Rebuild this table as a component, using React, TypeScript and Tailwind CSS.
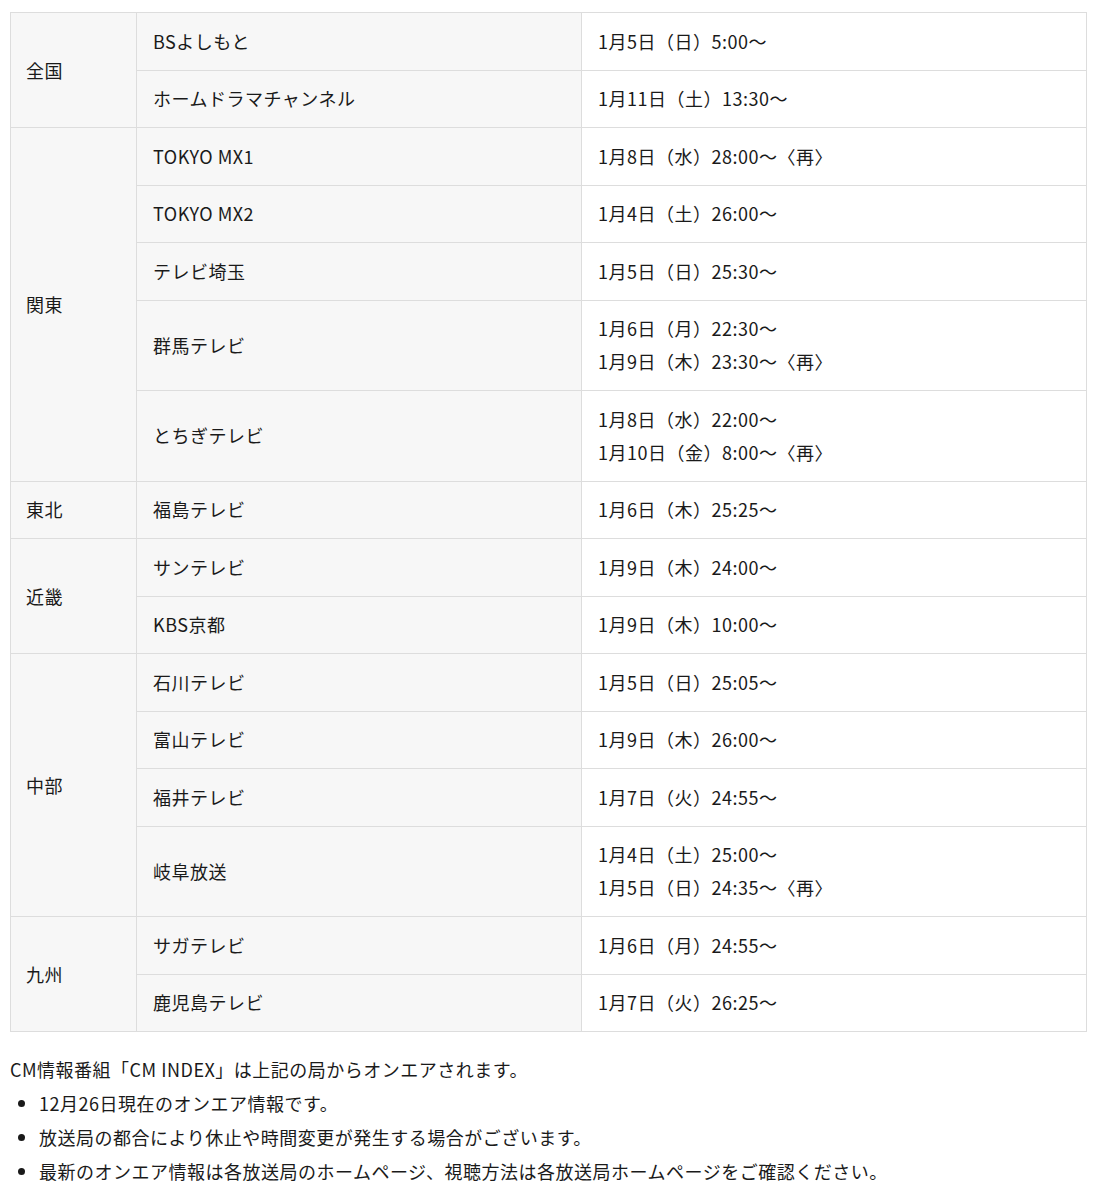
const font = { fontFamily: '"Noto Sans CJK JP", "Noto Sans", sans-serif' }

interface Station {
  name: string
  times: string[]
}

interface Region {
  region: string
  stations: Station[]
}

const schedule: Region[] = [
  {
    region: '全国',
    stations: [
      { name: 'BSよしもと', times: ['1月5日（日）5:00〜'] },
      { name: 'ホームドラマチャンネル', times: ['1月11日（土）13:30〜'] },
    ],
  },
  {
    region: '関東',
    stations: [
      { name: 'TOKYO MX1', times: ['1月8日（水）28:00〜〈再〉'] },
      { name: 'TOKYO MX2', times: ['1月4日（土）26:00〜'] },
      { name: 'テレビ埼玉', times: ['1月5日（日）25:30〜'] },
      { name: '群馬テレビ', times: ['1月6日（月）22:30〜', '1月9日（木）23:30〜〈再〉'] },
      { name: 'とちぎテレビ', times: ['1月8日（水）22:00〜', '1月10日（金）8:00〜〈再〉'] },
    ],
  },
  {
    region: '東北',
    stations: [{ name: '福島テレビ', times: ['1月6日（木）25:25〜'] }],
  },
  {
    region: '近畿',
    stations: [
      { name: 'サンテレビ', times: ['1月9日（木）24:00〜'] },
      { name: 'KBS京都', times: ['1月9日（木）10:00〜'] },
    ],
  },
  {
    region: '中部',
    stations: [
      { name: '石川テレビ', times: ['1月5日（日）25:05〜'] },
      { name: '富山テレビ', times: ['1月9日（木）26:00〜'] },
      { name: '福井テレビ', times: ['1月7日（火）24:55〜'] },
      { name: '岐阜放送', times: ['1月4日（土）25:00〜', '1月5日（日）24:35〜〈再〉'] },
    ],
  },
  {
    region: '九州',
    stations: [
      { name: 'サガテレビ', times: ['1月6日（月）24:55〜'] },
      { name: '鹿児島テレビ', times: ['1月7日（火）26:25〜'] },
    ],
  },
]

const notes = [
  '12月26日現在のオンエア情報です。',
  '放送局の都合により休止や時間変更が発生する場合がございます。',
  '最新のオンエア情報は各放送局のホームページ、視聴方法は各放送局ホームページをご確認ください。',
]

const cell = 'border border-[#dddddd] px-[15px] py-[11.75px] align-middle text-left font-normal'

export default function App() {
  return (
    <div className="bg-white text-[#1a1a1a] text-[18px] leading-[33px] tracking-[0.5px]" style={font}>
      <div className="pl-[10px] pr-[8px] pt-[12px] pb-6">
        <table className="w-full border-collapse table-fixed">
          <colgroup>
            <col className="w-[126px]" />
            <col className="w-[445px]" />
            <col />
          </colgroup>
          <tbody>
            {schedule.map((r) =>
              r.stations.map((s, i) => (
                <tr key={r.region + s.name}>
                  {i === 0 && (
                    <th rowSpan={r.stations.length} className={`${cell} bg-[#f7f7f7]`}>
                      {r.region}
                    </th>
                  )}
                  <td className={`${cell} bg-[#f7f7f7] pl-[16px]`}>{s.name}</td>
                  <td className={`${cell} bg-white pl-[16px]`}>
                    {s.times.map((t) => (
                      <div key={t}>{t}</div>
                    ))}
                  </td>
                </tr>
              ))
            )}
          </tbody>
        </table>

        <div className="mt-[20px]">
          <p className="leading-[34px]">CM情報番組「CM INDEX」は上記の局からオンエアされます。</p>
          <ul className="pl-[29px] list-disc">
            {notes.map((n) => (
              <li key={n} className="leading-[34px]">
                {n}
              </li>
            ))}
          </ul>
        </div>
      </div>
    </div>
  )
}
